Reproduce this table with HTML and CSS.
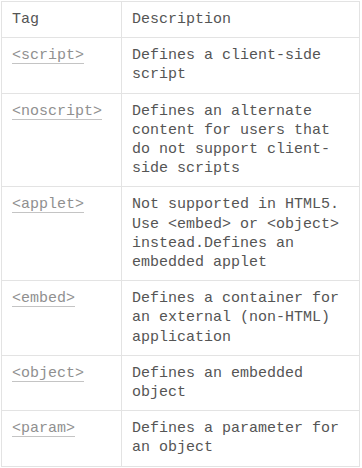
FILE: index.html
```
<!DOCTYPE html>
<html>
<head>
<meta charset="utf-8">
<link rel="stylesheet" href="styles.css">
</head>
<body>
<table class="tags">
  <thead>
    <tr><th class="col-tag">Tag</th><th>Description</th></tr>
  </thead>
  <tbody>
    <tr><td><a class="tag" href="#">&lt;script&gt;</a></td><td>Defines a client-side script</td></tr>
    <tr><td><a class="tag" href="#">&lt;noscript&gt;</a></td><td>Defines an alternate content for users that do not support client-side scripts</td></tr>
    <tr><td><a class="tag" href="#">&lt;applet&gt;</a></td><td>Not supported in HTML5. Use &lt;embed&gt; or &lt;object&gt; instead.Defines an embedded applet</td></tr>
    <tr><td><a class="tag" href="#">&lt;embed&gt;</a></td><td>Defines a container for an external (non-HTML) application</td></tr>
    <tr><td><a class="tag" href="#">&lt;object&gt;</a></td><td>Defines an embedded object</td></tr>
    <tr><td><a class="tag" href="#">&lt;param&gt;</a></td><td>Defines a parameter for an object</td></tr>
  </tbody>
</table>
</body>
</html>
```
FILE: styles.css
```
html, body {
  margin: 0;
  padding: 0;
  background: #ffffff;
}
body {
  padding: 1px;
  font-family: "Liberation Mono", "DejaVu Sans Mono", monospace;
  font-size: 15px;
  line-height: 19.2px;
  color: #555555;
}
.tags {
  border-collapse: collapse;
  width: 359px;
  table-layout: fixed;
}
.tags th,
.tags td {
  border: 1px solid #e3e3e3;
  padding: 8px 10px;
  text-align: left;
  vertical-align: top;
  font-weight: normal;
}
.col-tag {
  width: 99px;
}
.tag {
  color: #909090;
  text-decoration: underline;
  text-decoration-color: #c4c4c4;
  text-underline-offset: 4px;
}
```
